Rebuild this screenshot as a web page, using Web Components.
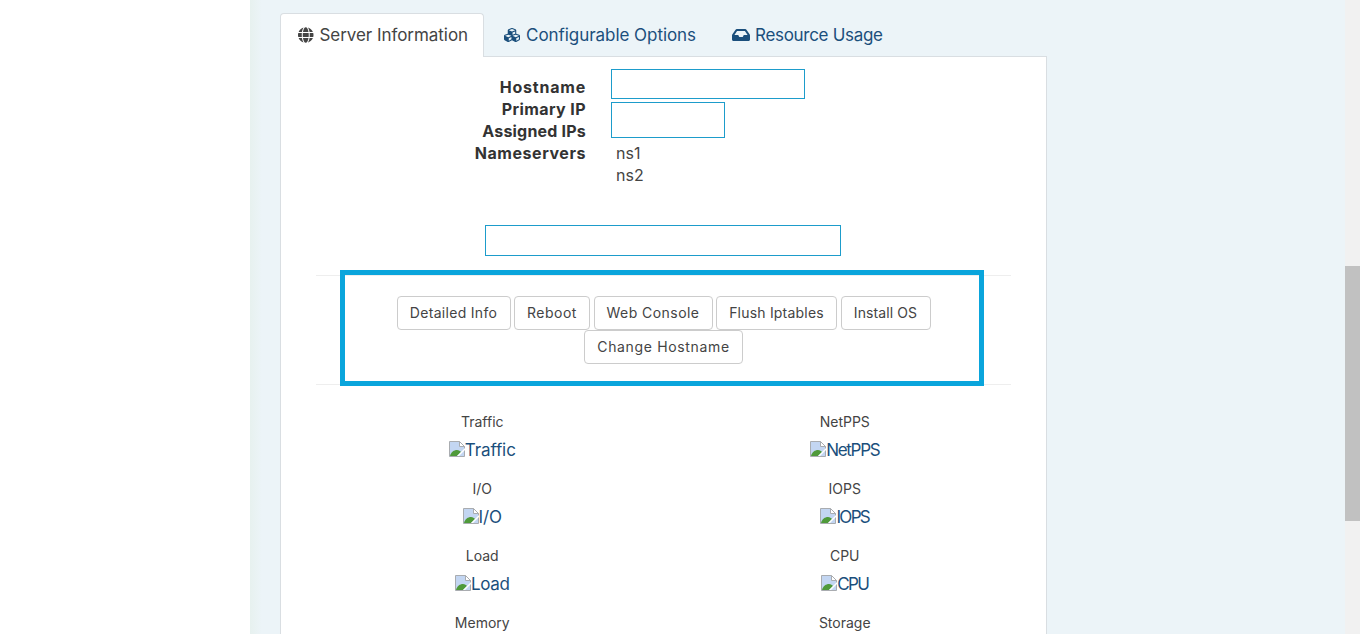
<!DOCTYPE html>
<html>
<head>
<meta charset="utf-8">
<title>Server Information</title>
<style>
  html, body { margin: 0; height: 634px; overflow: hidden; background: #fff; }
  body { font: 16px/22px Inter, "Liberation Sans", sans-serif; color: #444; }
</style>
</head>
<body>
<app-shell>
  <tab-bar></tab-bar>
  <info-list></info-list>
  <blank-box style="--w:356px;--h:31px;margin:12px 0 0 184px"></blank-box>
  <action-bar></action-bar>
  <chart-grid></chart-grid>
</app-shell>

<script>
class AppShell extends HTMLElement {
  connectedCallback() {
    this.querySelector('tab-bar').slot = 'tabs';
    this.attachShadow({mode: 'open'}).innerHTML = `
      <style>
        :host { display: flex; height: 634px; overflow: hidden; }
        .side { width: 250px; flex: none; background: #fff; }
        .main { flex: 1; background: linear-gradient(90deg, #e7f1ef, #ecf4f8 12px); padding: 13px 0 0 30px; box-sizing: border-box; overflow: hidden; }
        .wrap { width: 767px; }
        .card { background: #fff; border: 1px solid #d9dee2; padding: 12px 20px 0; height: 700px; margin-top: -1px; }
        .bar { width: 15px; flex: none; background: #f1f1f1; padding-top: 266px; box-sizing: border-box; }
        .thumb { height: 255px; background: #c1c1c1; }
      </style>
      <div class="side"></div>
      <div class="main">
        <div class="wrap">
          <slot name="tabs"></slot>
          <div class="card"><slot></slot></div>
        </div>
      </div>
      <div class="bar"><div class="thumb"></div></div>
    `;
  }
}
customElements.define('app-shell', AppShell);

const ICONS = {
  globe: ['0 0 496 512', 'M336.5 160C322 70.7 287.8 8 248 8s-74 62.7-88.5 152h177zM152 256c0 22.2 1.2 43.5 3.3 64h185.3c2.1-20.5 3.3-41.8 3.3-64s-1.2-43.5-3.3-64H155.3c-2.1 20.5-3.3 41.8-3.3 64zm324.7-96c-28.6-67.9-86.5-120.4-158-141.6 24.4 33.8 41.2 84.7 50 141.6h108zM177.2 18.4C105.8 39.6 47.8 92.1 19.3 160h108c8.7-56.9 25.5-107.8 49.9-141.6zM487.4 192H372.7c2.1 21 3.3 42.5 3.3 64s-1.2 43-3.3 64h114.6c5.5-20.5 8.6-41.8 8.6-64s-3.1-43.5-8.5-64zM120 256c0-21.5 1.2-43 3.3-64H8.6C3.2 212.5 0 233.8 0 256s3.2 43.5 8.6 64h114.6c-2-21-3.2-42.5-3.2-64zm39.5 96c14.5 89.3 48.7 152 88.5 152s74-62.7 88.5-152h-177zm159.3 141.6c71.4-21.2 129.4-73.7 158-141.6h-108c-8.8 56.9-25.6 107.8-50 141.6zM19.3 352c28.6 67.9 86.5 120.4 158 141.6-24.4-33.8-41.2-84.7-50-141.6h-108z'],
  cubes: ['0 0 512 512', 'M488.6 250.2L392 214V105.5c0-15-9.3-28.4-23.4-33.7l-100-37.5c-8.1-3.1-17.1-3.1-25.3 0l-100 37.5c-14.1 5.3-23.4 18.7-23.4 33.7V214l-96.6 36.2C9.3 255.5 0 268.9 0 283.9V394c0 13.6 7.7 26.1 19.9 32.2l100 50c10.1 5.1 22.1 5.1 32.2 0l103.9-52 103.9 52c10.1 5.1 22.1 5.1 32.2 0l100-50c12.2-6.1 19.9-18.6 19.9-32.2V283.9c0-15-9.3-28.4-23.4-33.7zM358 214.8l-85 31.9v-68.2l85-37v73.3zM154 104.1l102-38.2 102 38.2v.6l-102 41.4-102-41.4v-.6zm84 291.1l-85 42.5v-79.1l85-38.8v75.4zm0-112l-102 41.4-102-41.4v-.6l102-38.2 102 38.2v.6zm240 112l-85 42.5v-79.1l85-38.8v75.4zm0-112l-102 41.4-102-41.4v-.6l102-38.2 102 38.2v.6z'],
  inbox: ['0 0 576 512', 'M567.938 243.908L462.25 85.374A48.003 48.003 0 0 0 422.311 64H153.689a48 48 0 0 0-39.938 21.374L8.062 243.908A47.994 47.994 0 0 0 0 270.533V400c0 26.51 21.49 48 48 48h480c26.51 0 48-21.49 48-48V270.533a47.994 47.994 0 0 0-8.062-26.625zM162.252 128h251.497l85.333 128H376l-32 64H232l-32-64H76.918l85.334-128z']
};

class TabBar extends HTMLElement {
  connectedCallback() {
    const tab = (icon, label, cls, ls, gap) => `
      <a class="${cls}" style="letter-spacing:${ls}px;gap:${gap}px">
        <svg viewBox="${ICONS[icon][0]}" height="16"><path fill="currentColor" d="${ICONS[icon][1]}"/></svg>${label}
      </a>`;
    this.attachShadow({mode: 'open'}).innerHTML = `
      <style>
        :host { display: block; position: relative; z-index: 1; }
        .tabs { display: flex; height: 44px; font-size: 17px; color: #1b4f7c; }
        a { display: flex; align-items: center; box-sizing: border-box; height: 44px; padding: 0 15px 2px 19px; border: 1px solid transparent; border-bottom: 0; }
        a.active { background: #fff; color: #444; border-color: #d9dee2; border-radius: 4px 4px 0 0; padding: 0 15px 2px 17px; }
        svg { flex: none; }
      </style>
      <div class="tabs">
        ${tab('globe', 'Server Information', 'active', -.05, 6)}
        ${tab('cubes', 'Configurable Options', '', -.05, 6)}
        ${tab('inbox', 'Resource Usage', '', -.3, 5)}
      </div>
    `;
  }
}
customElements.define('tab-bar', TabBar);

class BlankBox extends HTMLElement {
  connectedCallback() {
    this.attachShadow({mode: 'open'}).innerHTML = `
      <style>
        :host { display: block; box-sizing: border-box; width: var(--w); height: var(--h); border: 1px solid #1d9ccb; }
      </style>
    `;
  }
}
customElements.define('blank-box', BlankBox);

class InfoList extends HTMLElement {
  connectedCallback() {
    this.attachShadow({mode: 'open'}).innerHTML = `
      <style>
        :host { display: grid; grid-template-columns: 285px 1fr; column-gap: 25px; height: 144px; }
        .labels { text-align: right; font-weight: 700; color: #333; padding-top: 7px; }
        .values { display: flex; flex-direction: column; }
        .ns { padding: 4px 0 0 5px; }
      </style>
      <div class="labels">
        <div style="letter-spacing:.8px">Hostname</div>
        <div style="letter-spacing:.4px">Primary IP</div>
        <div style="letter-spacing:.2px">Assigned IPs</div>
        <div style="letter-spacing:.55px">Nameservers</div>
      </div>
      <div class="values">
        <blank-box style="--w:194px;--h:30px"></blank-box>
        <blank-box style="--w:114px;--h:36px;margin-top:3px"></blank-box>
        <div class="ns"><div>ns1</div><div>ns2</div></div>
      </div>
    `;
  }
}
customElements.define('info-list', InfoList);

class ActionBar extends HTMLElement {
  connectedCallback() {
    const btns = [['Detailed Info', 114, .3], ['Reboot', 76, .5], ['Web Console', 119, .45], ['Flush Iptables', 121, .2], ['Install OS', 90, .1], ['Change Hostname', 159, .65]];
    this.attachShadow({mode: 'open'}).innerHTML = `
      <style>
        :host { display: block; position: relative; margin: 19px 15px 0; border-top: 1px solid #eee; border-bottom: 1px solid #eee; height: 108px; }
        .btns { display: flex; flex-wrap: wrap; justify-content: center; gap: 0 3.5px; padding: 20px 60px 0; }
        button { box-sizing: border-box; height: 34px; padding: 0; font: 14px/20px Inter, "Liberation Sans", sans-serif; color: #444; background: #fff; border: 1px solid #ccc; border-radius: 4px; }
        .mark { position: absolute; left: 24px; right: 27px; top: -6px; bottom: -2px; border: 5px solid #0aa5dc; }
      </style>
      <div class="btns">${btns.map(([n, w, ls]) => `<button style="width:${w}px;letter-spacing:${ls}px">${n}</button>`).join('')}</div>
      <div class="mark"></div>
    `;
  }
}
customElements.define('action-bar', ActionBar);

class ChartGrid extends HTMLElement {
  connectedCallback() {
    // last row only shows its title, the rest is under the fold
    const names = [['Traffic', -.1], ['NetPPS', -1.3], ['I/O', -.1], ['IOPS', -1.7], ['Load', -.3], ['CPU', -1.6], ['Memory'], ['Storage']];
    const broken = `<svg width="16" height="16" viewBox="0 0 16 16"><path fill="#c3d6f2" stroke="#a9acb0" d="M.5.5h10l5 5v10H.5z"/><path fill="#fff" stroke="#a9acb0" d="M10.5.5v5h5z"/><path fill="#4f9a3a" d="M1 15c1-4 4-6 7-6 2 0 3 1 4 2l-4 4z"/><path fill="#fff" d="M8 15l8-8v2l-6 6z"/></svg>`;
    this.attachShadow({mode: 'open'}).innerHTML = `
      <style>
        :host { display: grid; grid-template-columns: 1fr 1fr; text-align: center; margin-top: 26px; }
        .cell { height: 67px; }
        .title { font-size: 14px; height: 22px; }
        .alt { display: flex; justify-content: center; align-items: center; color: #1b4f7c; font-size: 17px; height: 34px; }
        svg { flex: none; margin-bottom: 3px; }
      </style>
      ${names.map(([n, ls]) => `<div class="cell"><div class="title">${n}</div>${ls === undefined ? '' : `<div class="alt">${broken}<span style="letter-spacing:${ls}px">${n}</span></div>`}</div>`).join('')}
    `;
  }
}
customElements.define('chart-grid', ChartGrid);
</script>
</body>
</html>
